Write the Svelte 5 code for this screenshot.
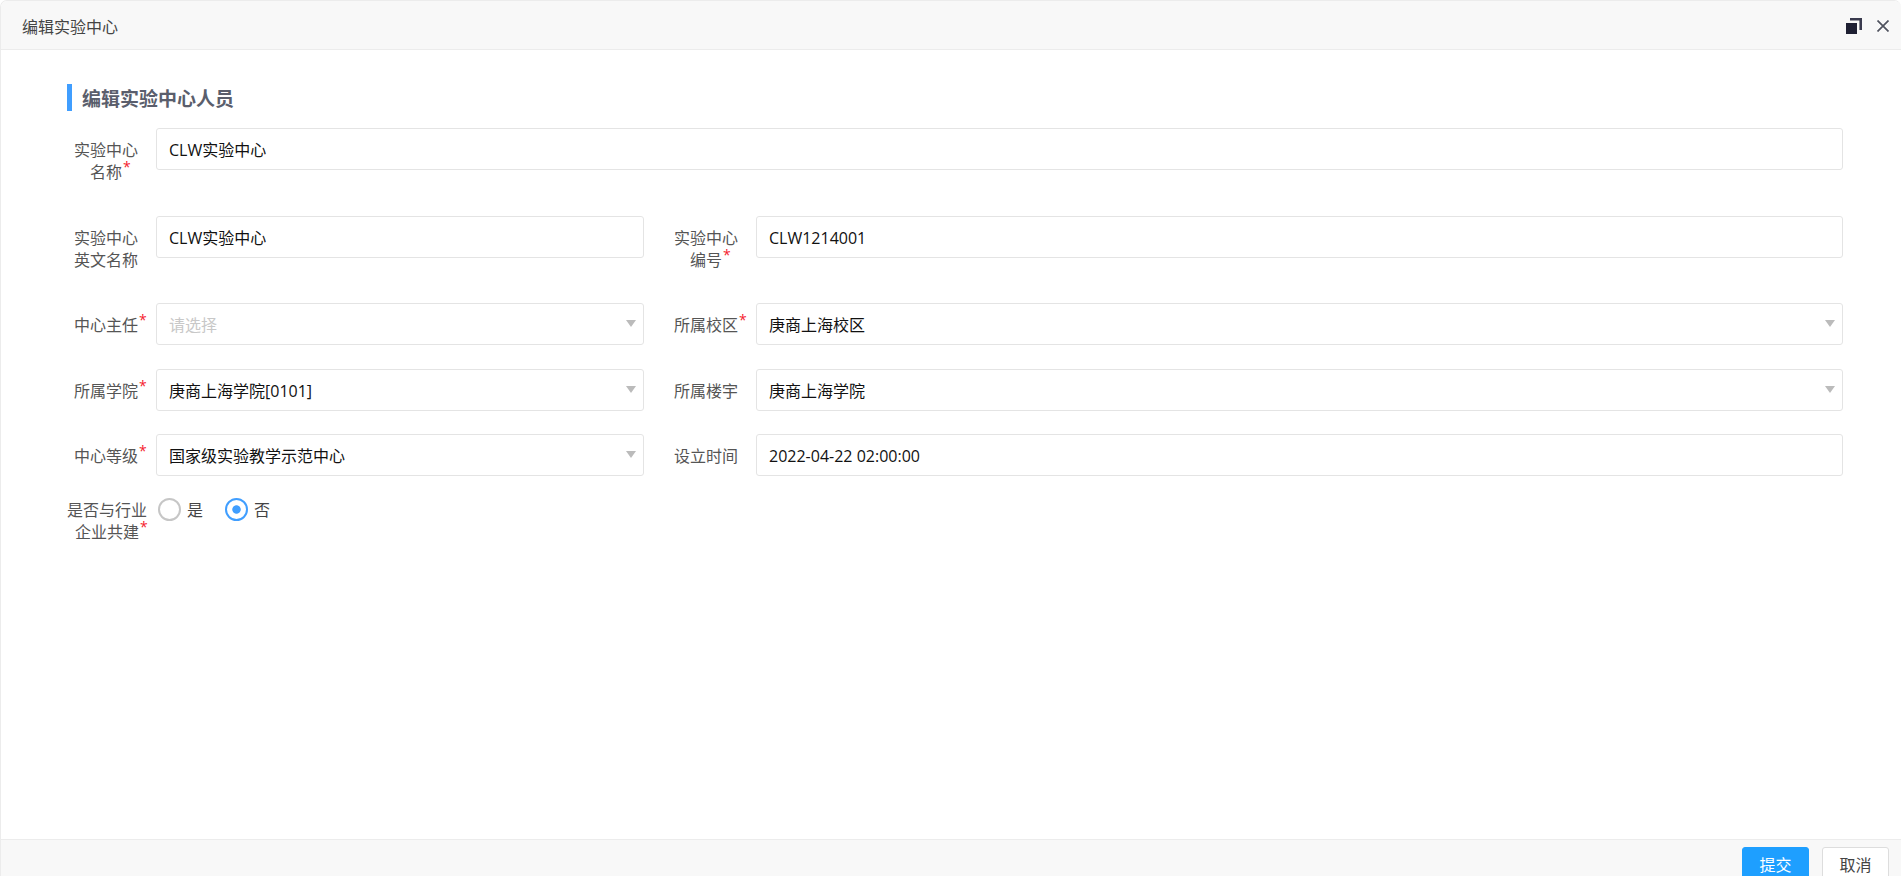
<script>
	const fields = [
		{ label: ['实验中心', '名称'], required: true, value: 'CLW实验中心', wide: true },
		{ label: ['实验中心', '英文名称'], value: 'CLW实验中心' },
		{ label: ['实验中心', '编号'], required: true, value: 'CLW1214001' },
		{ label: ['中心主任'], required: true, placeholder: '请选择', select: true },
		{ label: ['所属校区'], required: true, value: '庚商上海校区', select: true },
		{ label: ['所属学院'], required: true, value: '庚商上海学院[0101]', select: true },
		{ label: ['所属楼宇'], value: '庚商上海学院', select: true },
		{ label: ['中心等级'], required: true, value: '国家级实验教学示范中心', select: true },
		{ label: ['设立时间'], value: '2022-04-22 02:00:00' }
	];
</script>

<div class="dialog">
	<header class="titlebar">
		<span class="title">编辑实验中心</span>
		<div class="window-actions">
			<svg width="16" height="16" viewBox="0 0 16 16" aria-label="还原">
				<path d="M4 0h12v12h-2.6V2.4H4z" fill="#3a3b4e" />
				<rect x="0" y="5" width="11" height="11" fill="#1f2033" />
			</svg>
			<svg width="12" height="12" viewBox="0 0 12 12" aria-label="关闭">
				<path d="M.5.5l11 11M11.5.5l-11 11" stroke="#50535f" stroke-width="1.7" fill="none" />
			</svg>
		</div>
	</header>

	<main class="body">
		<h2 class="section-title">编辑实验中心人员</h2>

		<div class="form">
			{#each fields as field}
				<div class="field" class:wide={field.wide}>
					<div class="label">
						{#each field.label as line, i}
							<div>
								{#if field.required && i === field.label.length - 1}
									<span class="req">{line}</span>
								{:else}
									{line}
								{/if}
							</div>
						{/each}
					</div>
					<div class="control">
						{#if field.placeholder}
							<span class="placeholder">{field.placeholder}</span>
						{:else}
							{field.value}
						{/if}
						{#if field.select}
							<i class="arrow"></i>
						{/if}
					</div>
				</div>
			{/each}

			<div class="field wide radio-field">
				<div class="label">
					<div>是否与行业</div>
					<div><span class="req">企业共建</span></div>
				</div>
				<div class="radios">
					<span class="radio"><i class="dot"></i>是</span>
					<span class="radio"><i class="dot checked"></i>否</span>
				</div>
			</div>
		</div>
	</main>

	<footer class="footer">
		<button class="btn primary">提交</button>
		<button class="btn">取消</button>
	</footer>
</div>

<style>
	:global(body) {
		margin: 0;
		background: #fff;
	}

	.dialog {
		height: 876px;
		box-sizing: border-box;
		display: flex;
		flex-direction: column;
		overflow: hidden;
		border: 1px solid #ececec;
		border-bottom: none;
		border-right: none;
		border-radius: 7px 7px 0 0;
		font-family: "Open Sans", "Noto Sans CJK SC", sans-serif;
		font-size: 16px;
		color: #555;
	}

	.titlebar {
		height: 48px;
		flex: none;
		display: flex;
		align-items: center;
		justify-content: space-between;
		padding: 0 12px 0 21px;
		background: #f8f8f8;
		border-bottom: 1px solid #ececec;
	}

	.title {
		padding-top: 2px;
		color: #444;
	}

	.window-actions {
		display: flex;
		align-items: center;
		gap: 15px;
		padding-top: 1px;
	}

	.body {
		flex: 1;
		padding: 34px 58px 0 65px;
	}

	.section-title {
		box-sizing: border-box;
		margin: 0 0 17px 1px;
		height: 27px;
		line-height: 30px;
		padding-left: 10px;
		border-left: 5px solid #409eff;
		font-size: 19px;
		font-weight: 700;
		color: #5a5e6c;
	}

	.form {
		display: grid;
		grid-template-columns: 578px 1fr;
		column-gap: 22px;
		row-gap: 23.5px;
		align-items: start;
	}

	.field {
		display: flex;
		gap: 10px;
	}

	.field.wide {
		grid-column: 1 / -1;
	}

	.label {
		width: 80px;
		flex: none;
		padding: 11px 0 9px;
		line-height: 22px;
		text-align: center;
	}

	.req {
		position: relative;
	}

	.req::after {
		content: "*";
		position: absolute;
		left: 100%;
		top: -4px;
		margin-left: 1px;
		font-size: 14px;
		line-height: 20px;
		color: #f5222d;
	}

	.control {
		position: relative;
		flex: 1;
		height: 42px;
		box-sizing: border-box;
		padding: 0 12px;
		line-height: 42px;
		border: 1px solid #e4e4e4;
		border-radius: 3px;
		color: #111;
		background: #fff;
	}

	.placeholder {
		color: #c8c8c8;
	}

	.arrow {
		position: absolute;
		right: 7px;
		top: 16px;
		width: 0;
		height: 0;
		border-left: 5.5px solid transparent;
		border-right: 5.5px solid transparent;
		border-top: 7px solid #bbb;
	}

	.radio-field {
		margin-top: -1px;
	}

	.radio-field .label {
		padding: 0 0 0 1px;
	}

	.radios {
		display: flex;
		gap: 22px;
		padding-left: 1px;
		height: 22px;
		color: #444;
		line-height: 22px;
	}

	.radio {
		display: flex;
		align-items: center;
		gap: 6px;
	}

	.dot {
		width: 23px;
		height: 23px;
		box-sizing: border-box;
		border: 2px solid #c6c6c6;
		border-radius: 50%;
		background: #fff;
	}

	.dot.checked {
		border-color: #409eff;
		background: radial-gradient(circle, #409eff 0 3.8px, #fff 4.6px);
	}

	.footer {
		height: 37px;
		box-sizing: border-box;
		flex: none;
		display: flex;
		align-items: flex-start;
		justify-content: flex-end;
		gap: 13px;
		padding: 7px 12px 0 0;
		background: #f8f8f8;
		border-top: 1px solid #ececec;
	}

	.btn {
		width: 67px;
		height: 34px;
		flex: none;
		padding: 0;
		font: inherit;
		color: #444;
		background: #fff;
		border: 1px solid #ddd;
		border-radius: 3px;
	}

	.btn.primary {
		color: #fff;
		background: #1e9fff;
		border-color: #1e9fff;
	}
</style>
